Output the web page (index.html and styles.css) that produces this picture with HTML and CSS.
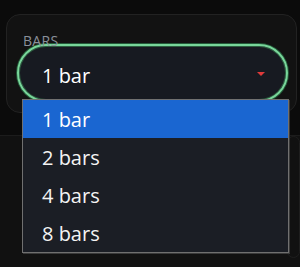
FILE: index.html
```html
<!DOCTYPE html>
<html>
    <head>
        <title>Bars</title>
        <link rel="stylesheet" href="styles.css">
    </head>
    <body>
        <div class="field_box">
            <div class="field_label">BARS</div>
            <div class="select_box">
                <span class="select_value">1 bar</span>
                <span class="select_arrow"></span>
            </div>
        </div>
        <div class="lower_box">
            <div class="lower_card"></div>
        </div>
        <ul class="option_list">
            <li class="option selected">1 bar</li>
            <li class="option">2 bars</li>
            <li class="option">4 bars</li>
            <li class="option">8 bars</li>
        </ul>
    </body>
</html>
```

FILE: styles.css
```css
html, body {
    margin: 0;
    padding: 0;
    height: 100%;
}
body {
    background: #0b0b0b;
    font-family: "Open Sans", "Noto Sans", Arial, sans-serif;
    color: #f2f2f2;
    position: relative;
    overflow: hidden;
}
.field_box {
    margin: 14px 3px 0 6px;
    height: 99px;
    box-sizing: border-box;
    padding: 19px 8px 0 10px;
    border: 1px solid #222222;
    border-radius: 14px;
    background: #121212;
}
.field_label {
    padding-left: 6px;
    font-size: 14px;
    line-height: 14px;
    letter-spacing: 0.3px;
    color: #8a909a;
}
.select_box {
    margin-top: -4px;
    height: 58px;
    box-sizing: border-box;
    border: 2px solid #78d69a;
    border-radius: 29px;
    box-shadow: 0 0 0 1px #245a39, inset 0 0 0 1px #2c5e3f;
    background: #171a21;
    display: flex;
    align-items: center;
    padding: 5px 21px 0 23px;
}
.select_value {
    flex: 1;
    font-size: 20px;
    font-weight: 500;
    color: #ffffff;
}
.select_arrow {
    width: 0;
    height: 0;
    border-left: 4px solid transparent;
    border-right: 4px solid transparent;
    border-top: 4px solid #e03a3a;
    margin-top: -3px;
}
.lower_box {
    margin-top: 22px;
    border-top: 1px solid #1c1c1c;
    background: #111111;
    height: 140px;
    position: relative;
    overflow: hidden;
}
.lower_card {
    margin: 0 0 0 287px;
    height: 120px;
    border: 1px solid #1e1e1e;
    border-radius: 14px;
}

/* open dropdown, drawn over the page */
.option_list {
    position: absolute;
    left: 22px;
    top: 99px;
    width: 265px;
    margin: 0;
    padding: 0;
    list-style: none;
    border: 1px solid #707070;
    box-shadow: 1px 1px 0 #3a3a3a;
    background: #1b1e25;
}
.option {
    height: 38px;
    line-height: 40px;
    padding-left: 19px;
    font-size: 20px;
    font-weight: 500;
    color: #f4f4f4;
}
.option.selected {
    background: #1a66d1;
    color: #ffffff;
}
```
